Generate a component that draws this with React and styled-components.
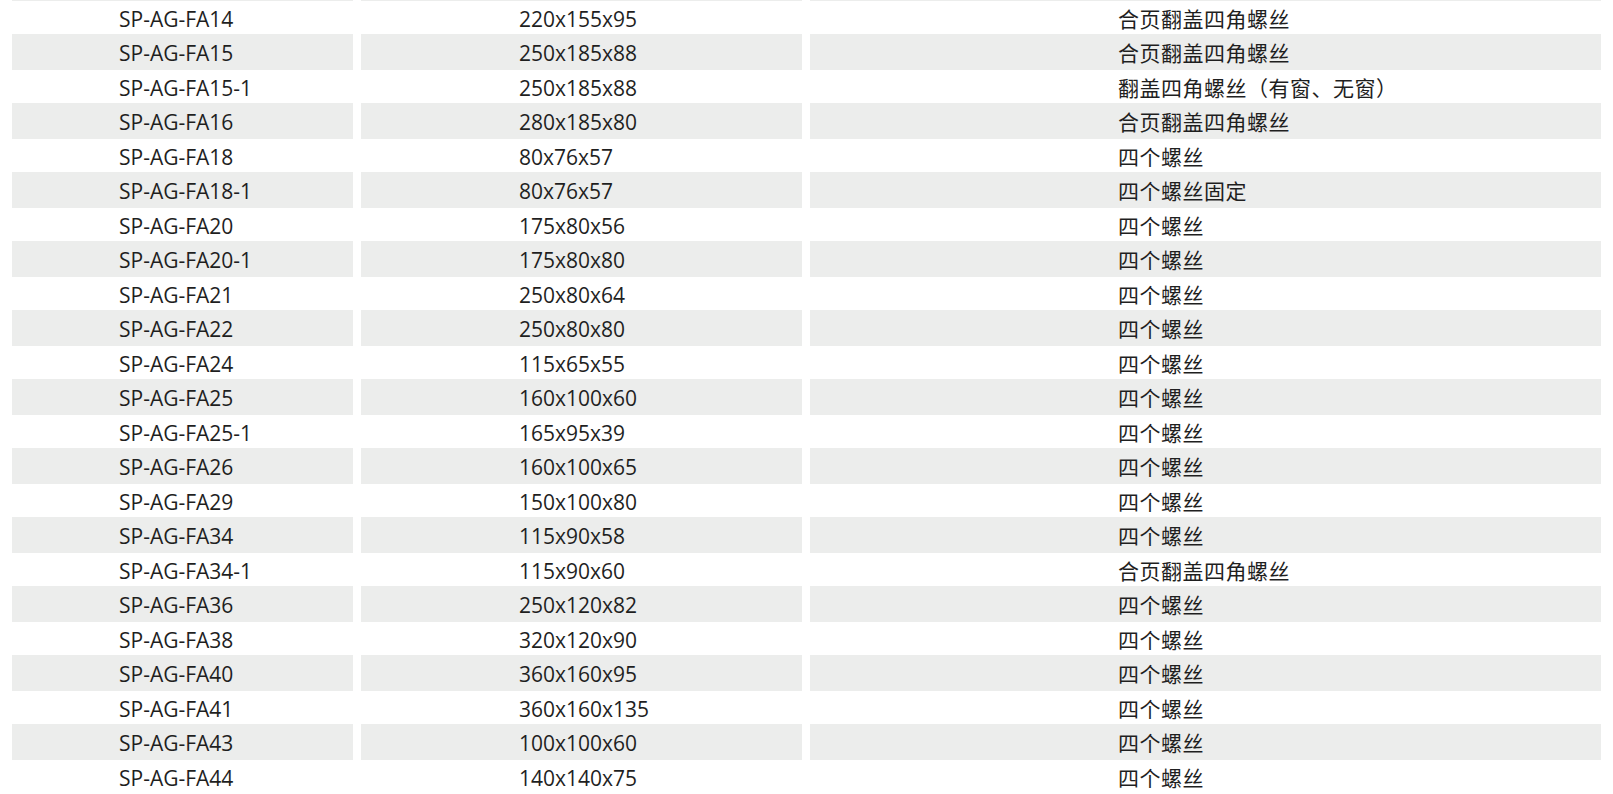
import React from "react";
import styled, { createGlobalStyle } from "styled-components";

const Global = createGlobalStyle`
  html, body { margin: 0; padding: 0; background: #ffffff; overflow: hidden; }
  body { font-family: "Open Sans", "Noto Sans CJK SC", sans-serif; }
`;

const Table = styled.div`
  display: flex;
  flex-direction: column;
  padding-left: 12px;
`;

const Row = styled.div`
  display: grid;
  grid-template-columns: 341px 441px 791px;
  column-gap: 8px;
  height: ${(p) => (p.$edge ? "1px" : p.$shaded ? "36px" : "33px")};
`;

const Cell = styled.div`
  display: flex;
  align-items: center;
  padding-top: 2px;
  box-sizing: border-box;
  padding-left: ${(p) => p.$indent}px;
  background: ${(p) => (p.$shaded ? "#ecedec" : "#ffffff")};
  color: #1f1f1f;
  font-size: 21px;
  line-height: 28px;
  letter-spacing: ${(p) => (p.$cjk ? "0.5px" : "0")};
  text-spacing-trim: space-all;
  white-space: nowrap;
  overflow: hidden;
`;

const rows = [
  ["SP-AG-FA14", "220x155x95", "合页翻盖四角螺丝"],
  ["SP-AG-FA15", "250x185x88", "合页翻盖四角螺丝"],
  ["SP-AG-FA15-1", "250x185x88", "翻盖四角螺丝（有窗、无窗）"],
  ["SP-AG-FA16", "280x185x80", "合页翻盖四角螺丝"],
  ["SP-AG-FA18", "80x76x57", "四个螺丝"],
  ["SP-AG-FA18-1", "80x76x57", "四个螺丝固定"],
  ["SP-AG-FA20", "175x80x56", "四个螺丝"],
  ["SP-AG-FA20-1", "175x80x80", "四个螺丝"],
  ["SP-AG-FA21", "250x80x64", "四个螺丝"],
  ["SP-AG-FA22", "250x80x80", "四个螺丝"],
  ["SP-AG-FA24", "115x65x55", "四个螺丝"],
  ["SP-AG-FA25", "160x100x60", "四个螺丝"],
  ["SP-AG-FA25-1", "165x95x39", "四个螺丝"],
  ["SP-AG-FA26", "160x100x65", "四个螺丝"],
  ["SP-AG-FA29", "150x100x80", "四个螺丝"],
  ["SP-AG-FA34", "115x90x58", "四个螺丝"],
  ["SP-AG-FA34-1", "115x90x60", "合页翻盖四角螺丝"],
  ["SP-AG-FA36", "250x120x82", "四个螺丝"],
  ["SP-AG-FA38", "320x120x90", "四个螺丝"],
  ["SP-AG-FA40", "360x160x95", "四个螺丝"],
  ["SP-AG-FA41", "360x160x135", "四个螺丝"],
  ["SP-AG-FA43", "100x100x60", "四个螺丝"],
  ["SP-AG-FA44", "140x140x75", "四个螺丝"],
];

const indents = [107, 158, 308];

export default function App() {
  return (
    <>
      <Global />
      <Table>
        <Row $edge>
          <Cell $shaded />
          <Cell $shaded />
          <Cell $shaded />
        </Row>
        {rows.map((r, i) => {
          const shaded = i % 2 === 1;
          return (
            <Row key={r[0]} $shaded={shaded}>
              {r.map((t, j) => (
                <Cell key={j} $shaded={shaded} $indent={indents[j]} $cjk={j === 2}>
                  {t}
                </Cell>
              ))}
            </Row>
          );
        })}
      </Table>
    </>
  );
}
